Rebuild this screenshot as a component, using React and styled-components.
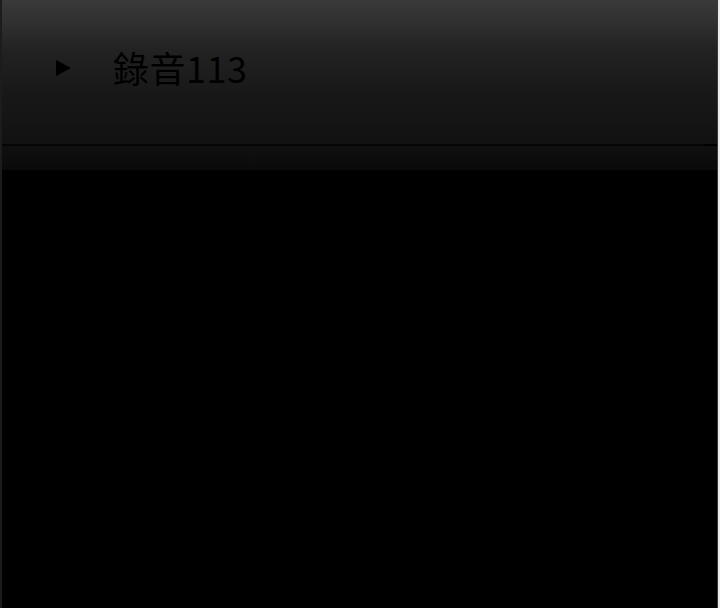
import styled, { createGlobalStyle } from "styled-components";

const GlobalStyle = createGlobalStyle`
    html, body {
        margin: 0;
        padding: 0;
        background: #000;
    }
    #root {
        height: 608px;
    }
`;

const App = () => {
    return (
        <>
            <GlobalStyle />
            <Frame>
                <Screen>
                    <Header>
                        <PlayMark />
                        <Title>錄音113</Title>
                    </Header>
                    <Divider />
                    <Fade />
                    <Body />
                </Screen>
                <EdgeLine />
            </Frame>
        </>
    );
}

const Frame = styled.div`
    width: 720px;
    height: 608px;
    display: flex;
    flex-direction: row;
    background-color: #000;
    border-right: 2px solid #ececec;
    box-sizing: border-box;
`;

const Screen = styled.div`
    flex: 1;
    display: flex;
    flex-direction: column;
    border-left: 2px solid #1c1c1c;
`;

const EdgeLine = styled.div`
    width: 1px;
    background-color: #3a3a3a;
`;

const Header = styled.div`
    height: 144px;
    display: flex;
    flex-direction: row;
    align-items: center;
    padding-left: 54px;
    padding-bottom: 6px;
    box-sizing: border-box;
    background: linear-gradient(to bottom, #3a3a3a 0%, #222 35%, #181818 65%, #111 100%);
`;

const PlayMark = styled.div`
    width: 0;
    height: 0;
    border-top: 8px solid transparent;
    border-bottom: 8px solid transparent;
    border-left: 15px solid #000;
    margin-right: 42px;
    margin-top: -2px;
`;

const Title = styled.span`
    font-family: "Noto Sans CJK TC", "Noto Sans", sans-serif;
    font-size: 36px;
    letter-spacing: 0.5px;
    color: #000;
    line-height: 1;
    margin-top: -4px;
`;

const Divider = styled.div`
    height: 2px;
    margin-right: 13px;
    background-color: #050505;
`;

const Fade = styled.div`
    height: 24px;
    background: linear-gradient(to bottom, #101010, #0a0a0a);
`;

const Body = styled.div`
    flex: 1;
    background-color: #000;
`;

export default App;
